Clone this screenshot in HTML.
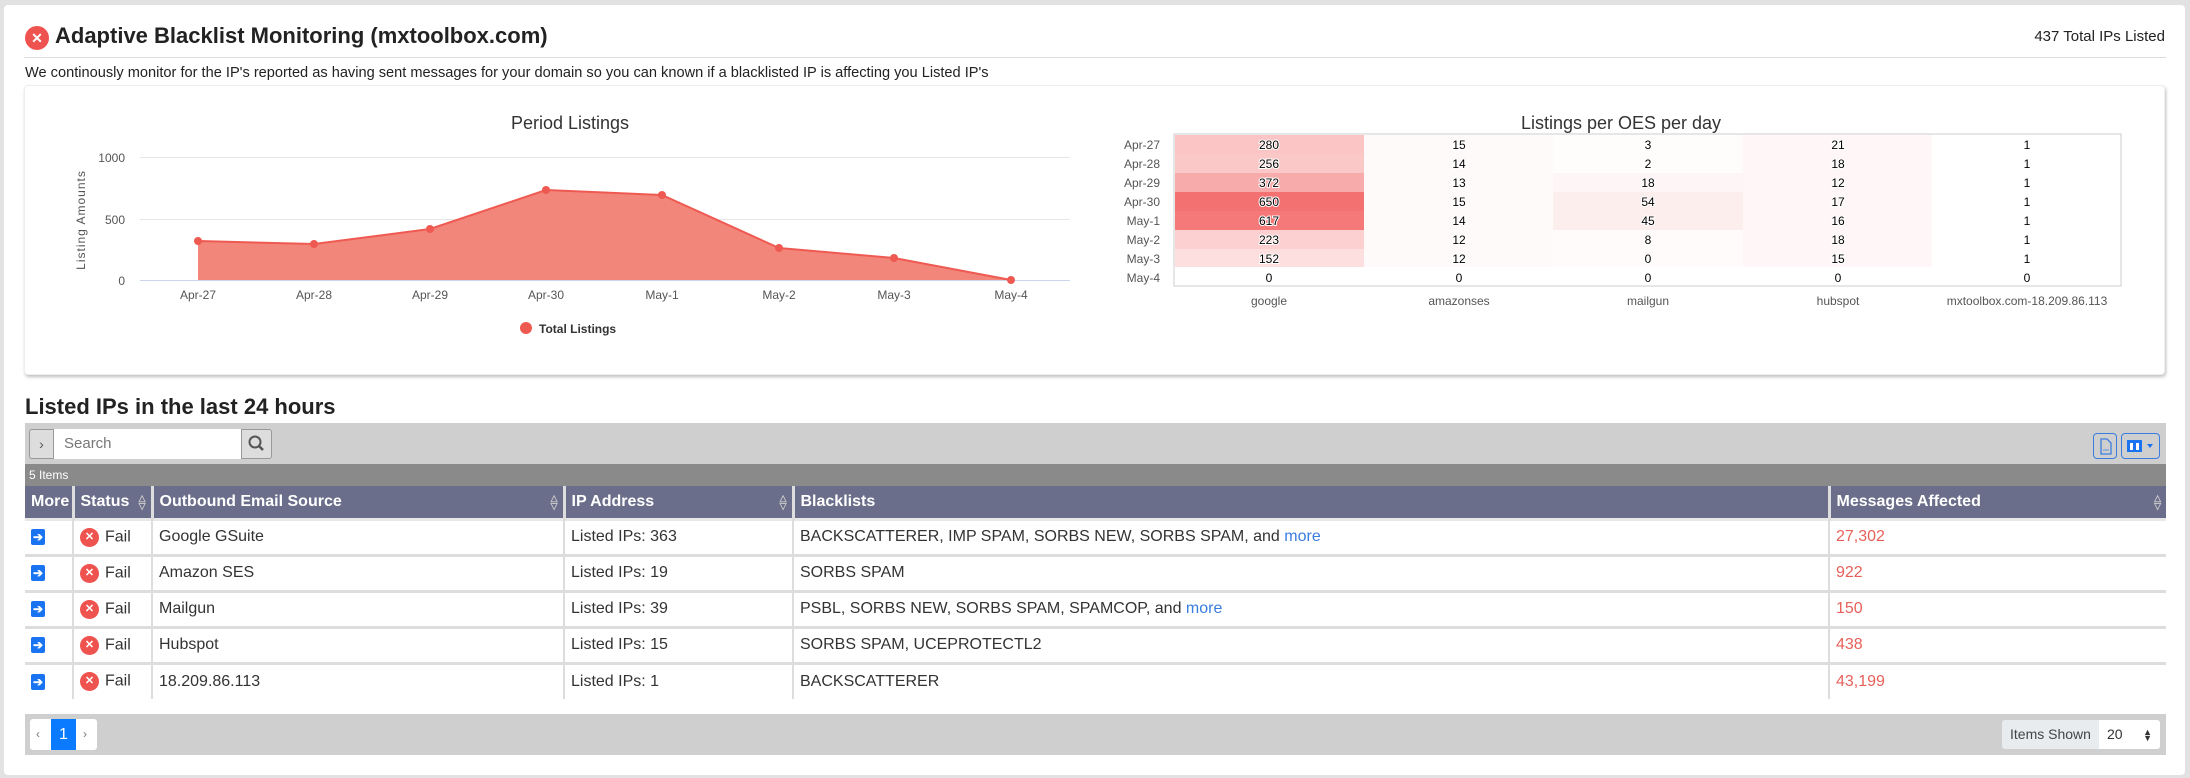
<!DOCTYPE html>
<html><head><meta charset="utf-8"><style>
*{box-sizing:border-box;margin:0;padding:0}
body{width:2190px;height:778px;background:#e2e2e2;font-family:"Liberation Sans",Arial,sans-serif;color:#222;position:relative;overflow:hidden}
.abs{position:absolute}
.panel{left:4px;top:5px;width:2181px;height:770px;background:#fff;border-radius:4px}
.title{left:55px;top:23px;font-size:22px;font-weight:bold;color:#222;white-space:nowrap}
.ic{border-radius:50%;background:#ef5350;color:#fff;text-align:center;font-weight:bold}
.card{left:24px;top:85px;width:2141px;height:290px;background:#fff;border:1px solid #eee;border-radius:4px;box-shadow:1px 2px 3px rgba(0,0,0,.25)}
table{border-collapse:collapse;position:absolute;left:25px;top:486px;width:2141px;font-size:16px;table-layout:fixed}
th{background:#6b6e8a;color:#fff;text-align:left;height:33px;padding:0 6px;border-left:3px solid #ddd;position:relative;font-size:16px}
th:first-child,td:first-child{border-left:none}
td{height:36px;padding:0 6px;border-left:2px solid #ddd;border-top:3px solid #ddd;color:#333;white-space:nowrap}
tr:nth-child(2) td{border-top:3px solid #e8e8e8}
.sort{position:absolute;right:5px;top:8px;color:#ccc;font-size:9px;line-height:8px}
.red{color:#e8605a}
.blue{color:#3a7de0}
.arr{display:inline-block;width:14px;height:16px;background:#1a73f0;border-radius:2px;color:#fff;font-size:12px;line-height:16px;text-align:center;font-weight:bold;vertical-align:middle}
.fail{display:inline-block;width:19px;height:19px;border-radius:50%;background:#ef5350;color:#fff;font-size:11px;line-height:19px;text-align:center;font-weight:bold;vertical-align:middle;margin-right:6px}
</style></head><body>
<div class="abs panel"></div>
<div class="abs ic" style="left:25px;top:26px;width:24px;height:24px;font-size:14px;line-height:24px">✕</div>
<div class="abs title">Adaptive Blacklist Monitoring (mxtoolbox.com)</div>
<div class="abs" style="right:25px;top:28px;font-size:15px;color:#222">437 Total IPs Listed</div>
<div class="abs" style="left:24px;top:57px;width:2142px;height:1px;background:#ddd"></div>
<div class="abs" style="left:25px;top:65px;font-size:14.6px;white-space:nowrap">We continously monitor for the IP's reported as having sent messages for your domain so you can known if a blacklisted IP is affecting you Listed IP's</div>
<div class="abs card"></div>
<svg class="abs" style="left:0;top:0" width="2190" height="380" font-family="Liberation Sans, Arial, sans-serif">
<text x="570" y="129" font-size="18" text-anchor="middle" fill="#333">Period Listings</text>
<g stroke="#e6e6e6" stroke-width="1"><line x1="140" y1="157.5" x2="1070" y2="157.5"/><line x1="140" y1="219.5" x2="1070" y2="219.5"/></g>
<line x1="140" y1="280.5" x2="1070" y2="280.5" stroke="#ccd6eb"/>
<g font-size="12" fill="#555" text-anchor="end"><text x="125" y="162">1000</text><text x="125" y="224">500</text><text x="125" y="285">0</text></g>
<text transform="translate(85,220) rotate(-90)" font-size="12" fill="#555" text-anchor="middle" letter-spacing="1">Listing Amounts</text>
<path d="M198,241 L314,244 L430,229 L546,190 L662,195 L779,248 L894,258 L1011,280 L198,280Z" fill="#f3867a"/>
<polyline points="198,241 314,244 430,229 546,190 662,195 779,248 894,258 1011,280" fill="none" stroke="#ee5a52" stroke-width="2"/>
<g fill="#ee5a52"><circle cx="198" cy="241" r="4"/><circle cx="314" cy="244" r="4"/><circle cx="430" cy="229" r="4"/><circle cx="546" cy="190" r="4"/><circle cx="662" cy="195" r="4"/><circle cx="779" cy="248" r="4"/><circle cx="894" cy="258" r="4"/><circle cx="1011" cy="280" r="4"/></g>
<g font-size="12" fill="#555" text-anchor="middle"><text x="198" y="299">Apr-27</text><text x="314" y="299">Apr-28</text><text x="430" y="299">Apr-29</text><text x="546" y="299">Apr-30</text><text x="662" y="299">May-1</text><text x="779" y="299">May-2</text><text x="894" y="299">May-3</text><text x="1011" y="299">May-4</text></g>
<circle cx="526" cy="328" r="6" fill="#ee5a52"/>
<text x="539" y="333" font-size="12" font-weight="bold" fill="#333">Total Listings</text>
<text x="1621" y="129" font-size="18" text-anchor="middle" fill="#333">Listings per OES per day</text>
<g>
<rect x="1174" y="134" width="947" height="152" fill="#fff" stroke="#ccc"/>
<rect x="1175" y="135" width="189" height="19" fill="#fbc5c5"/>
<rect x="1175" y="154" width="189" height="19" fill="#fbc8c8"/>
<rect x="1175" y="173" width="189" height="19" fill="#f8abab"/>
<rect x="1175" y="192" width="189" height="19" fill="#f47171"/>
<rect x="1175" y="211" width="189" height="19" fill="#f57979"/>
<rect x="1175" y="230" width="189" height="19" fill="#fcd0d0"/>
<rect x="1175" y="249" width="189" height="18" fill="#fddfdf"/>
<rect x="1364" y="135" width="189" height="132" fill="#fffafa"/>
<rect x="1553" y="135" width="190" height="38" fill="#fffcfc"/>
<rect x="1553" y="173" width="190" height="19" fill="#fef6f6"/>
<rect x="1553" y="192" width="190" height="38" fill="#fdeeee"/>
<rect x="1553" y="230" width="190" height="37" fill="#fffbfb"/>
<rect x="1743" y="135" width="189" height="132" fill="#fff7f7"/>
</g>
<g font-size="12" fill="#555" text-anchor="end"><text x="1160" y="149">Apr-27</text><text x="1160" y="168">Apr-28</text><text x="1160" y="187">Apr-29</text><text x="1160" y="206">Apr-30</text><text x="1160" y="225">May-1</text><text x="1160" y="244">May-2</text><text x="1160" y="263">May-3</text><text x="1160" y="282">May-4</text></g>
<g font-size="12" fill="#000" text-anchor="middle" stroke="#fff" stroke-width="2" paint-order="stroke">
<text x="1269" y="149">280</text><text x="1269" y="168">256</text><text x="1269" y="187">372</text><text x="1269" y="206">650</text><text x="1269" y="225">617</text><text x="1269" y="244">223</text><text x="1269" y="263">152</text><text x="1269" y="282">0</text>
<text x="1459" y="149">15</text><text x="1459" y="168">14</text><text x="1459" y="187">13</text><text x="1459" y="206">15</text><text x="1459" y="225">14</text><text x="1459" y="244">12</text><text x="1459" y="263">12</text><text x="1459" y="282">0</text>
<text x="1648" y="149">3</text><text x="1648" y="168">2</text><text x="1648" y="187">18</text><text x="1648" y="206">54</text><text x="1648" y="225">45</text><text x="1648" y="244">8</text><text x="1648" y="263">0</text><text x="1648" y="282">0</text>
<text x="1838" y="149">21</text><text x="1838" y="168">18</text><text x="1838" y="187">12</text><text x="1838" y="206">17</text><text x="1838" y="225">16</text><text x="1838" y="244">18</text><text x="1838" y="263">15</text><text x="1838" y="282">0</text>
<text x="2027" y="149">1</text><text x="2027" y="168">1</text><text x="2027" y="187">1</text><text x="2027" y="206">1</text><text x="2027" y="225">1</text><text x="2027" y="244">1</text><text x="2027" y="263">1</text><text x="2027" y="282">0</text>
</g>
<g font-size="12" fill="#555" text-anchor="middle"><text x="1269" y="305">google</text><text x="1459" y="305">amazonses</text><text x="1648" y="305">mailgun</text><text x="1838" y="305">hubspot</text><text x="2027" y="305">mxtoolbox.com-18.209.86.113</text></g>
</svg>
<div class="abs" style="left:25px;top:394px;font-size:22px;font-weight:bold;color:#222">Listed IPs in the last 24 hours</div>
<div class="abs" style="left:25px;top:423px;width:2141px;height:41px;background:#cfcfcf"></div>
<div class="abs" style="left:29px;top:429px;width:25px;height:30px;background:#ddd;border:1px solid #999;border-radius:3px 0 0 3px;text-align:center;line-height:28px;font-size:14px;color:#555">›</div>
<div class="abs" style="left:54px;top:429px;width:187px;height:30px;background:#fff;padding-left:10px;line-height:30px;font-size:15px;color:#777">Search</div>
<div class="abs" style="left:241px;top:429px;width:31px;height:30px;background:#ddd;border:1px solid #999;border-radius:0 3px 3px 0"><svg width="29" height="28"><circle cx="13" cy="12" r="5.5" fill="none" stroke="#555" stroke-width="2"/><line x1="17" y1="16" x2="21" y2="20" stroke="#555" stroke-width="2.5"/></svg></div>
<div class="abs" style="left:2093px;top:433px;width:24px;height:26px;border:1px solid #3a7de0;border-radius:4px"><svg width="22" height="24"><path d="M7 5h6l4 4v11H7z" fill="none" stroke="#3a7de0" stroke-width="1.3"/><text x="12" y="17" font-size="4" fill="#3a7de0" text-anchor="middle">csv</text></svg></div>
<div class="abs" style="left:2121px;top:433px;width:39px;height:26px;border:1px solid #3a7de0;border-radius:4px"><svg width="37" height="24"><rect x="5" y="6" width="15" height="12" fill="#1a73f0"/><rect x="8" y="9" width="3" height="7" fill="#fff"/><rect x="14" y="9" width="3" height="7" fill="#fff"/><path d="M25 10h6l-3 4z" fill="#1a73f0"/></svg></div>
<div class="abs" style="left:25px;top:464px;width:2141px;height:22px;background:#8a8a8a;color:#fff;font-size:12px;line-height:22px;padding-left:4px">5 Items</div>
<table>
<colgroup><col style="width:48px"><col style="width:79px"><col style="width:412px"><col style="width:229px"><col style="width:1036px"><col></colgroup>
<tr><th>More</th><th>Status<span class="sort">△<br>▽</span></th><th>Outbound Email Source<span class="sort">△<br>▽</span></th><th>IP Address<span class="sort">△<br>▽</span></th><th>Blacklists</th><th>Messages Affected<span class="sort">△<br>▽</span></th></tr>
<tr><td><span class="arr">➔</span></td><td><span class="fail">✕</span>Fail</td><td>Google GSuite</td><td>Listed IPs: 363</td><td>BACKSCATTERER, IMP SPAM, SORBS NEW, SORBS SPAM, and <span class="blue">more</span></td><td class="red">27,302</td></tr>
<tr><td><span class="arr">➔</span></td><td><span class="fail">✕</span>Fail</td><td>Amazon SES</td><td>Listed IPs: 19</td><td>SORBS SPAM</td><td class="red">922</td></tr>
<tr><td><span class="arr">➔</span></td><td><span class="fail">✕</span>Fail</td><td>Mailgun</td><td>Listed IPs: 39</td><td>PSBL, SORBS NEW, SORBS SPAM, SPAMCOP, and <span class="blue">more</span></td><td class="red">150</td></tr>
<tr><td><span class="arr">➔</span></td><td><span class="fail">✕</span>Fail</td><td>Hubspot</td><td>Listed IPs: 15</td><td>SORBS SPAM, UCEPROTECTL2</td><td class="red">438</td></tr>
<tr><td><span class="arr">➔</span></td><td><span class="fail">✕</span>Fail</td><td>18.209.86.113</td><td>Listed IPs: 1</td><td>BACKSCATTERER</td><td class="red">43,199</td></tr>
</table>
<div class="abs" style="left:25px;top:714px;width:2141px;height:41px;background:#cfcfcf"></div>
<div class="abs" style="left:30px;top:719px;width:67px;height:31px;background:#fff;border-radius:3px;font-size:12px;color:#777;line-height:31px"><span style="position:absolute;left:6px">‹</span><span style="position:absolute;left:21px;width:25px;height:31px;background:#0a7bff;color:#fff;text-align:center;font-size:16px">1</span><span style="position:absolute;left:53px">›</span></div>
<div class="abs" style="left:2002px;top:720px;width:97px;height:29px;background:#e9ecef;font-size:14px;line-height:29px;text-align:center;color:#444;border-radius:3px 0 0 3px">Items Shown</div>
<div class="abs" style="left:2099px;top:720px;width:61px;height:29px;background:#fff;font-size:14px;line-height:29px;padding-left:8px;color:#333;border-radius:0 3px 3px 0">20<span style="position:absolute;right:8px;font-size:9px;line-height:6px;top:9px">▲<br>▼</span></div>
</body></html>
